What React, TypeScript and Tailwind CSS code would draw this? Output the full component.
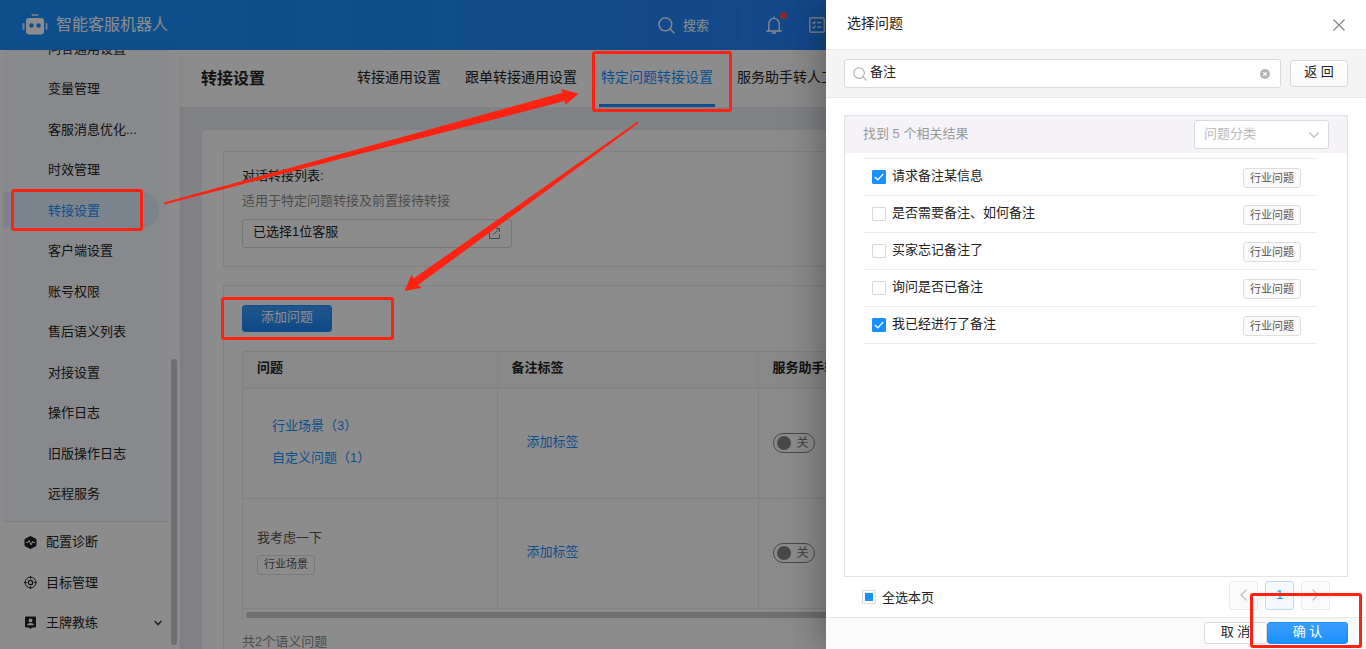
import { useState } from 'react'
import type { ReactNode } from 'react'

interface Question {
    id: number,
    name: string,
    checked: boolean
}

const subMenu = [
    '问答通用设置',
    '变量管理',
    '客服消息优化...',
    '时效管理',
    '转接设置',
    '客户端设置',
    '账号权限',
    '售后语义列表',
    '对接设置',
    '操作日志',
    '旧版操作日志',
    '远程服务',
]

const tabs = ['转接通用设置', '跟单转接通用设置', '特定问题转接设置', '服务助手转人工设置']

const initialQuestions: Question[] = [
    { id: 1, name: '请求备注某信息', checked: true },
    { id: 2, name: '是否需要备注、如何备注', checked: false },
    { id: 3, name: '买家忘记备注了', checked: false },
    { id: 4, name: '询问是否已备注', checked: false },
    { id: 5, name: '我已经进行了备注', checked: true },
]

function SearchIcon({ className }: { className: string }){
    return(
        <svg className={className} viewBox="0 0 18 18" fill="none" stroke="currentColor" strokeWidth="1.4" strokeLinecap="round">
            <circle cx="7.8" cy="7.8" r="6.8" />
            <path d="M12.8 12.8 17 17" />
        </svg>
    )
}

function RobotIcon(){
    return(
        <svg className="w-[26px] h-[22px]" viewBox="0 0 26 22" fill="#fff">
            <rect x="9.5" y="0" width="7" height="2" rx="1" opacity="0.7" />
            <path d="M7 4h12a3 3 0 0 1 3 3v10.500a3 3 0 0 1-3 3H7a3 3 0 0 1-3-3V7a3 3 0 0 1 3-3Zm2.500 5.200a2.300 2.300 0 1 0 0 4.600 2.300 2.300 0 0 0 0-4.600Zm7 0a2.300 2.300 0 1 0 0 4.600 2.300 2.300 0 0 0 0-4.600Z" fillRule="evenodd" />
            <rect x="0.500" y="9" width="2" height="7" rx="1" opacity="0.8" />
            <rect x="23.500" y="9" width="2" height="7" rx="1" opacity="0.8" />
        </svg>
    )
}

function Header(){
    return(
        <header className="h-[50px] shrink-0 flex items-center pl-[22px] pr-[541px] text-white bg-linear-to-r from-[#1890ff] from-10% to-[#2683fb] to-60%">
            <RobotIcon />
            <h1 className="ml-2 text-base">智能客服机器人</h1>
            <button className="ml-auto flex items-center gap-2 text-[13px]">
                <SearchIcon className="w-[17px] h-[17px]" />
                <span className="pt-[2px]">搜索</span>
            </button>
            <span className="ml-7 w-px h-[36px] bg-[#2379ea]" />
            <button className="relative ml-7" aria-label="notifications">
                <svg className="w-4 h-[18px]" viewBox="0 0 16 18" fill="none" stroke="#fff" strokeWidth="1.3" strokeLinecap="round">
                    <path d="M.8 15h14.400M2.800 15V7.600a5.200 5.200 0 0 1 10.400 0V15M8 2.300V1M6.300 17h3.400" />
                </svg>
                <span className="absolute -top-1 -right-[5px] w-[7px] h-[7px] rounded-full bg-[#fb5050]" />
            </button>
            <button className="ml-[27px]" aria-label="tasks">
                <svg className="w-4 h-4" viewBox="0 0 16 16" fill="none" stroke="#fff" strokeWidth="1.200">
                    <rect x=".8" y=".8" width="14.400" height="14.400" rx="1" />
                    <path d="M3.600 5.500 4.700 6.600 6.600 4.600M8.200 5.600h4M3.600 9.800l1.100 1.100 1.900-2M8.200 10.200h4" />
                </svg>
            </button>
        </header>
    )
}

function MainMenuItem({ icon, name, arrow }: { icon: ReactNode, name: string, arrow?: boolean }){
    return(
        <a href="#" className="flex items-center pl-6 pr-[18px]">
            {icon}
            <span className="ml-[9px]">{name}</span>
            {arrow && (
                <svg className="ml-auto w-2 h-[6px]" viewBox="0 0 8 6" fill="none" stroke="#444" strokeWidth="1.500">
                    <path d="M.6 1 4 4.600 7.400 1" />
                </svg>
            )}
        </a>
    )
}

function Sidebar(){
    return(
        <aside className="relative z-10 w-[180px] shrink-0 overflow-hidden bg-white flex flex-col justify-end pb-[6px] text-[13px] text-[#222] shadow-[0_0_6px_rgba(0,0,0,0.08)]">
            <nav className="ml-[3px] mr-3 pb-[7px] shrink-0 bg-[#f7faff] border-b border-[#e6eaf0]">
                <ul className="grid grid-rows-12 h-[486px]">
                    {subMenu.map((name) => (
                        <li key={name} className="flex items-center">
                            <a
                                href="#"
                                className={name === '转接设置'
                                    ? 'flex items-center h-9 w-[156px] pl-[45px] rounded-r-full bg-[#e0f0ff] text-[#1890ff]'
                                    : 'flex items-center h-9 w-[156px] pl-[45px]'}
                            >
                                {name}
                            </a>
                        </li>
                    ))}
                </ul>
            </nav>
            <nav className="grid grid-rows-3 h-[121px] shrink-0">
                <MainMenuItem
                    name="配置诊断"
                    icon={
                        <svg className="w-[13px] h-[13px]" viewBox="0 0 13 13">
                            <path d="M5.500.4a2 2 0 0 1 2 0l4 2.200a2 2 0 0 1 1 1.700v4.400a2 2 0 0 1-1 1.700l-4 2.200a2 2 0 0 1-2 0l-4-2.200a2 2 0 0 1-1-1.700V4.300a2 2 0 0 1 1-1.700Z" fill="#222" />
                            <path d="M2 6.500h1.800l1.300-2.200 2 4.600L8.700 5.400l.7 1.100H11" fill="none" stroke="#fff" />
                        </svg>
                    }
                />
                <MainMenuItem
                    name="目标管理"
                    icon={
                        <svg className="w-[13px] h-[13px]" viewBox="0 0 13 13" fill="none" stroke="#222">
                            <circle cx="6.500" cy="6.500" r="5.400" />
                            <circle cx="6.500" cy="6.500" r="2.200" strokeWidth="1.300" />
                            <path d="M6.500 0v2.600M6.500 10.400V13M0 6.500h2.600M10.400 6.500H13" />
                        </svg>
                    }
                />
                <MainMenuItem
                    arrow
                    name="王牌教练"
                    icon={
                        <svg className="w-[13px] h-[13px]" viewBox="0 0 13 13">
                            <path d="M2 .5h9a1 1 0 0 1 1 1v9a1 1 0 0 1-1 1H8L6.500 13 5 11.500H2a1 1 0 0 1-1-1v-9a1 1 0 0 1 1-1Z" fill="#222" />
                            <circle cx="6.500" cy="4.400" r="1.900" fill="#fff" />
                            <path d="M3 9.300c.4-3 6.600-3 7 0Z" fill="#fff" />
                        </svg>
                    }
                />
            </nav>
            <span className="absolute right-[3px] bottom-[4px] w-[6px] h-[286px] rounded-full bg-[#cbcbcb]" />
        </aside>
    )
}

function Toggle({ label }: { label: string }){
    const [on, setOn] = useState<boolean>(false)

    return(
        <button
            role="switch"
            aria-checked={on}
            aria-label={label}
            onClick={() => setOn(!on)}
            className="flex items-center w-[42px] h-5 px-[3px] rounded-full border border-[#858585] text-xs text-[#777]"
        >
            <span className="w-[14px] h-[14px] rounded-full bg-[#858585]" />
            <span className="ml-[6px]">{on ? '开' : '关'}</span>
        </button>
    )
}

function TransferPage(){
    return(
        <main className="flex-1 min-w-0 overflow-hidden bg-[#ebedf2]">
            <div className="h-[57px] flex items-center bg-white pl-[21px] text-[#222]">
                <h2 className="w-[154px] shrink-0 text-base font-semibold">转接设置</h2>
                <nav className="flex gap-5 h-full text-sm">
                    {tabs.map((tab) => (
                        <a
                            key={tab}
                            href="#"
                            className={tab === '特定问题转接设置'
                                ? 'flex items-center shrink-0 px-[2px] border-b-3 border-[#1890ff] text-[#1890ff]'
                                : 'flex items-center shrink-0 px-[2px] border-b-3 border-transparent'}
                        >
                            {tab}
                        </a>
                    ))}
                </nav>
            </div>

            <div className="mt-[23px] ml-[22px] mr-5 p-[21px] rounded-t bg-white text-[13px] text-[#222]">
                <section className="border border-[#ebebeb] px-[18px] pt-[14px] pb-[18px]">
                    <p className="leading-[20px]">对话转接列表:</p>
                    <p className="mt-[5px] leading-[20px] text-[#8c8c8c]">适用于特定问题转接及前置接待转接</p>
                    <button className="mt-2 flex items-center justify-between w-[270px] h-[29px] pl-[10px] pr-[11px] rounded-[3px] border border-[#d9d9d9] text-[#222]">
                        <span className="pb-1">已选择1位客服</span>
                        <svg className="w-[11px] h-[11px]" viewBox="0 0 11 11" fill="none" stroke="#888">
                            <path d="M5 .5H.5v10h10V6M7 .5h3.500V4M10.500.5 4.500 6.500" />
                        </svg>
                    </button>
                </section>

                <section className="mt-[18px] border border-[#ebebeb] px-[18px] pt-[19px] pb-5">
                    <button className="block w-[90px] h-[27px] pb-1 rounded-[3px] border border-[#1890ff] bg-linear-to-b from-[#3a9dff] to-[#1a86f5] text-white">
                        添加问题
                    </button>
                    <div className="mt-[19px] overflow-hidden border-l border-t border-[#ebebeb] rounded-tl">
                        <table className="w-[1020px] table-fixed border-collapse text-left">
                            <thead>
                                <tr className="h-9 bg-[#fafafa] border-b border-[#ebebeb]">
                                    <th className="w-[254px] pl-[14px] pb-1 font-bold border-r border-[#ebebeb]">问题</th>
                                    <th className="w-[261px] pl-[14px] pb-1 font-bold border-r border-[#ebebeb]">备注标签</th>
                                    <th className="pl-[14px] pb-1 font-bold">服务助手转人工</th>
                                </tr>
                            </thead>
                            <tbody>
                                <tr className="h-[110px] border-b border-[#ebebeb]">
                                    <td className="pl-[29px] pb-[2px] border-r border-[#ebebeb] text-[#1890ff]">
                                        <a href="#" className="block leading-[32px]">行业场景（3）</a>
                                        <a href="#" className="block leading-[32px]">自定义问题（1）</a>
                                    </td>
                                    <td className="pl-[29px] pb-[2px] border-r border-[#ebebeb] text-[#1890ff]">
                                        <a href="#">添加标签</a>
                                    </td>
                                    <td className="pl-[14px]"><Toggle label="行业场景" /></td>
                                </tr>
                                <tr className="h-[110px] border-b border-[#ebebeb]">
                                    <td className="pl-[14px] pb-1 border-r border-[#ebebeb] text-[#555]">
                                        <p className="leading-[20px]">我考虑一下</p>
                                        <span className="mt-[7px] flex items-center w-[58px] h-5 pl-[6px] rounded-[3px] border border-[#dedede] text-[11px]">行业场景</span>
                                    </td>
                                    <td className="pl-[29px] pb-[2px] border-r border-[#ebebeb] text-[#1890ff]">
                                        <a href="#">添加标签</a>
                                    </td>
                                    <td className="pl-[14px]"><Toggle label="我考虑一下" /></td>
                                </tr>
                            </tbody>
                        </table>
                        <div className="mt-[3px] mb-[3px] ml-[3px] h-[6px] rounded-full bg-[#cbcbcb]" />
                    </div>
                    <p className="mt-[11px] leading-[20px] text-[#8c8c8c]">共2个语义问题</p>
                </section>
            </div>
        </main>
    )
}

function SelectDrawer(){
    const [questions, setQuestions] = useState<Question[]>(initialQuestions)
    const [keyword, setKeyword] = useState<string>('备注')

    const allChecked = questions.every((q) => q.checked)
    const someChecked = questions.some((q) => q.checked) && !allChecked

    const toggle = (id: number) => {
        setQuestions(questions.map((q) => q.id === id ? { ...q, checked: !q.checked } : q))
    }

    const toggleAll = () => {
        setQuestions(questions.map((q) => ({ ...q, checked: !allChecked })))
    }

    return(
        <div role="dialog" aria-label="选择问题" className="absolute inset-y-0 right-0 w-[540px] flex flex-col bg-white text-[13px] text-[#222] shadow-[-6px_0_24px_rgba(0,0,0,0.18),-12px_0_48px_rgba(0,0,0,0.12)]">
            <div className="h-[50px] shrink-0 flex items-center justify-between pl-[21px] pr-[21px] border-b border-[#ebebeb]">
                <h3 className="pb-1 text-sm">选择问题</h3>
                <button aria-label="close">
                    <svg className="w-3 h-3" viewBox="0 0 12 12" fill="none" stroke="#888" strokeWidth="1.300">
                        <path d="M.5.5l11 11M11.500.5l-11 11" />
                    </svg>
                </button>
            </div>

            <div className="h-12 shrink-0 flex items-center gap-[9px] px-[18px] bg-[#f4f4f4] border-b border-[#e6e6e6]">
                <label className="flex-1 flex items-center h-[29px] px-2 rounded-[3px] border border-[#d9d9d9] bg-white">
                    <SearchIcon className="w-[14px] h-[14px] text-[#aaa]" />
                    <input
                        className="flex-1 min-w-0 ml-[3px] pb-1 outline-none"
                        type="text"
                        aria-label="搜索问题"
                        value={keyword}
                        onChange={(e) => setKeyword(e.target.value)}
                    />
                    <button aria-label="clear" className="mr-[2px]" onClick={() => setKeyword('')}>
                        <svg className="w-[10px] h-[10px]" viewBox="0 0 10 10">
                            <circle cx="5" cy="5" r="5" fill="#b5b5b5" />
                            <path d="M3.300 3.300l3.400 3.400M6.700 3.300 3.300 6.700" stroke="#fff" strokeWidth="1.200" />
                        </svg>
                    </button>
                </label>
                <button className="w-[58px] h-[27px] pb-1 rounded-[3px] border border-[#d9d9d9] bg-linear-to-b from-white to-[#f9f9f9]">返 回</button>
            </div>

            <div className="flex-1 min-h-0 mt-[17px] mx-[18px] border border-[#e3e3e3]">
                <div className="h-[37px] flex items-center justify-between pl-[18px] pr-[18px] bg-[#f5f3f7]">
                    <p className="pb-[2px] text-[#999]">找到 5 个相关结果</p>
                    <div className="flex items-center w-[135px] h-[29px] rounded-[3px] border border-[#d9d9d9] bg-white">
                        <select aria-label="问题分类" className="flex-1 pl-[9px] pb-[2px] appearance-none outline-none text-[#bbb]">
                            <option>问题分类</option>
                        </select>
                        <svg className="w-[10px] h-[6px] mr-[9px] pointer-events-none" viewBox="0 0 10 6" fill="none" stroke="#bbb" strokeWidth="1.200">
                            <path d="M.5.5 5 5.200 9.500.5" />
                        </svg>
                    </div>
                </div>
                <ul className="mt-[5px] ml-[18px] mr-[30px] border-t border-[#ebebeb]">
                    {questions.map((q) => (
                        <li key={q.id} className="h-[37px] flex items-center justify-between pl-[9px] pr-4 border-b border-[#ebebeb]">
                            <label className="flex items-center">
                                <span className="grid place-items-center">
                                    <input
                                        type="checkbox"
                                        checked={q.checked}
                                        onChange={() => toggle(q.id)}
                                        className="[grid-area:1/1] appearance-none w-[14px] h-[14px] rounded-[1px] border border-[#d9d9d9] bg-white checked:bg-[#1890ff] checked:border-[#1890ff]"
                                    />
                                    {q.checked && (
                                        <svg className="[grid-area:1/1] w-[10px] h-2 pointer-events-none" viewBox="0 0 10 8" fill="none" stroke="#fff" strokeWidth="1.200">
                                            <path d="M.8 4 3.800 6.800 9.200 1" />
                                        </svg>
                                    )}
                                </span>
                                <span className="ml-[6px] pb-[2px]">{q.name}</span>
                            </label>
                            <span className="mt-[2px] flex items-center w-[58px] h-5 pl-[6px] rounded-[3px] border border-[#dedede] bg-[#fafafa] text-[11px] text-[#555]">行业问题</span>
                        </li>
                    ))}
                </ul>
            </div>

            <div className="h-10 shrink-0 flex items-center justify-between px-9 pr-9">
                <label className="flex items-center">
                    <span className="grid place-items-center">
                        <input
                            type="checkbox"
                            checked={allChecked}
                            onChange={toggleAll}
                            className="[grid-area:1/1] appearance-none w-[14px] h-[14px] rounded-[1px] border border-[#d9d9d9] bg-white checked:bg-[#1890ff]"
                        />
                        {someChecked && <span className="[grid-area:1/1] w-2 h-2 bg-[#1890ff] pointer-events-none" />}
                    </span>
                    <span className="ml-[6px] pt-[2px]">全选本页</span>
                </label>
                <div className="flex gap-[7px] pb-1">
                    <button aria-label="previous page" className="grid place-items-center w-[29px] h-[29px] rounded-[3px] border border-[#ebebeb] bg-[#fafafa]">
                        <svg className="w-[7px] h-3" viewBox="0 0 7 12" fill="none" stroke="#bbb" strokeWidth="1.200">
                            <path d="M6.500.6 1 6l5.500 5.400" />
                        </svg>
                    </button>
                    <button className="w-[29px] h-[29px] rounded-[3px] border border-[#bcdcff] bg-[#f4f9ff] text-[#1890ff]">1</button>
                    <button aria-label="next page" className="grid place-items-center w-[29px] h-[29px] rounded-[3px] border border-[#ebebeb] bg-[#fafafa]">
                        <svg className="w-[7px] h-3" viewBox="0 0 7 12" fill="none" stroke="#bbb" strokeWidth="1.200">
                            <path d="M.5.6 6 6 .5 11.400" />
                        </svg>
                    </button>
                </div>
            </div>

            <div className="h-8 shrink-0 flex items-start justify-end pt-1 pr-[18px] border-t border-[#e6e6e6] bg-[#fafafa]">
                <button className="w-[63px] h-[22px] pb-1 leading-[18px] rounded-[3px] border border-[#d9d9d9] bg-white">取 消</button>
                <button className="w-[81px] h-[22px] pb-1 leading-[18px] rounded-[3px] border border-[#1890ff] bg-linear-to-b from-[#3a9dff] to-[#1890ff] text-white">确 认</button>
            </div>
        </div>
    )
}

// red boxes and arrows of the guide, drawn over everything else
function GuideMarks(){
    return(
        <div className="absolute inset-0 pointer-events-none">
            <span className="absolute left-[11px] top-[189px] w-[132px] h-[42px] rounded-[3px] border-3 border-[#ff2212]" />
            <span className="absolute left-[592px] top-[51px] w-[140px] h-[61px] rounded-[3px] border-3 border-[#ff2212]" />
            <span className="absolute left-[221px] top-[297px] w-[173px] h-[43px] rounded-[3px] border-3 border-[#ff2212]" />
            <span className="absolute right-[4px] bottom-[1px] w-[112px] h-[55px] rounded-[3px] border-3 border-[#ff2212]" />
            <svg className="absolute left-0 top-0 w-[700px] h-[320px]" viewBox="0 0 700 320" fill="#ff2212">
                <path d="M164 202.600 562.300 92.700 561.300 89 578.500 93.700 565.300 104.900 564.700 101 164.400 204.400Z" />
                <path d="M637.700 121.600 413.300 278.700 411.700 274.300 404.500 291 422.200 287.700 417.700 285.300 638.700 123.100Z" />
            </svg>
        </div>
    )
}

export default function App(){
    return(
        <div className="relative h-screen overflow-hidden flex flex-col font-['Liberation_Sans','Noto_Sans_CJK_SC',sans-serif]">
            <Header />
            <div className="flex-1 min-h-0 flex">
                <Sidebar />
                <TransferPage />
            </div>
            <div className="absolute inset-0 z-20 overflow-hidden bg-black/45">
                <SelectDrawer />
                <GuideMarks />
            </div>
        </div>
    )
}
